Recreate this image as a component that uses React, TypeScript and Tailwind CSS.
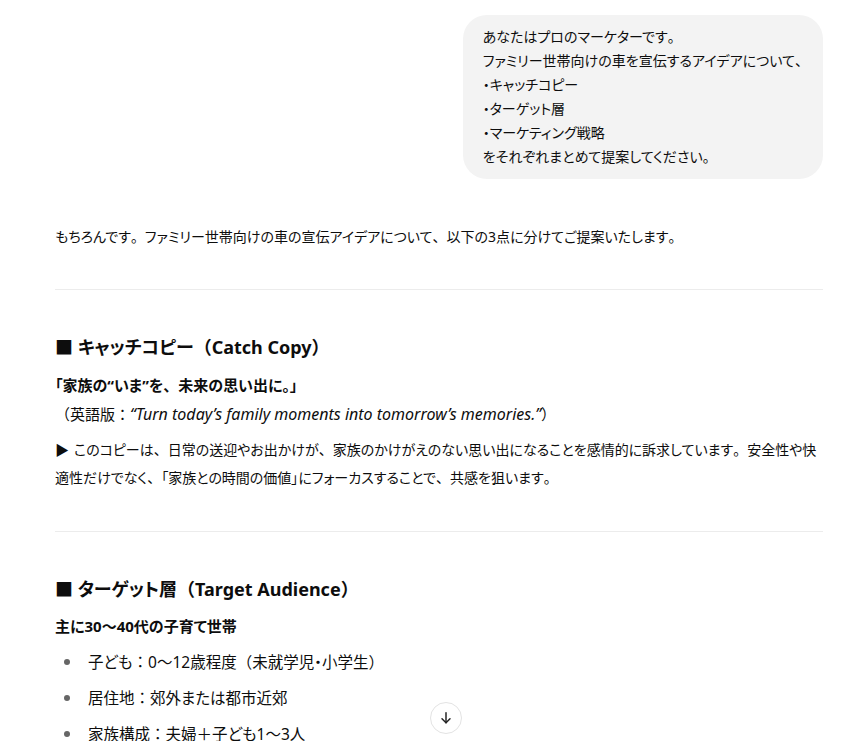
import React from "react";

const font = {
  fontFamily: '"Noto Sans", "Noto Sans CJK JP", sans-serif',
};

// Full-width punctuation keeps its full width; kana use proportional widths.
const J = ({ t }: { t: string }) => (
  <>
    {t.split(/([、。（）：＋〜])/).map((s, i) =>
      /^[、。（）：＋〜]$/.test(s) ? (
        <span key={i} className="[font-feature-settings:normal]">
          {s}
        </span>
      ) : (
        <React.Fragment key={i}>{s}</React.Fragment>
      )
    )}
  </>
);

const Bullet = ({ t }: { t: string }) => (
  <li className="flex h-[36px] items-center">
    <span className="ml-[9px] mr-[18px] h-[6px] w-[6px] shrink-0 rounded-full bg-[#666]" />
    <span>
      <J t={t} />
    </span>
  </li>
);

export default function App() {
  return (
    <div
      className="relative h-[741px] w-[861px] overflow-hidden bg-white text-[#0d0d0d] [font-feature-settings:'palt']"
      style={font}
    >
      <div className="ml-[55px] w-[768px] pt-[15px]">
        {/* user bubble */}
        <div className="flex justify-end">
          <div className="w-fit whitespace-nowrap rounded-[24px] bg-[#f3f3f3] py-[10px] pl-5 pr-[14px] text-[14px] leading-[24px]">
            <p><J t="あなたはプロのマーケターです。" /></p>
            <p><J t="ファミリー世帯向けの車を宣伝するアイデアについて、" /></p>
            <p>・キャッチコピー</p>
            <p>・ターゲット層</p>
            <p>・マーケティング戦略</p>
            <p><J t="をそれぞれまとめて提案してください。" /></p>
          </div>
        </div>

        {/* assistant */}
        <div className="mt-[44px] text-[14px] leading-[28px]">
          <p>
            <J t="もちろんです。ファミリー世帯向けの車の宣伝アイデアについて、以下の3点に分けてご提案いたします。" />
          </p>
          <hr className="mb-[43px] mt-[38px] border-t border-[#ececec]" />

          <h3 className="text-[18px] font-bold leading-[28px]">
            ■ <J t="キャッチコピー（Catch Copy）" />
          </h3>
          <p className="mt-[10px] text-[15px] font-bold">
            <J t="「家族の“いま”を、未来の思い出に。」" />
          </p>
          <p className="mt-[1px] text-[15px]">
            <J t="（英語版：" />
            <em className="text-[16px]">“Turn today’s family moments into tomorrow’s memories.”</em>
            <J t="）" />
          </p>
          <p className="mt-[8px]">
            <span className="mr-[5px]">▶</span>
            <J t="このコピーは、日常の送迎やお出かけが、家族のかけがえのない思い出になることを感情的に訴求しています。安全性や快適性だけでなく、「家族との時間の価値」にフォーカスすることで、共感を狙います。" />
          </p>
          <hr className="mb-[43px] mt-[39px] border-t border-[#ececec]" />

          <h3 className="text-[18px] font-bold leading-[28px]">
            ■ <J t="ターゲット層（Target Audience）" />
          </h3>
          <p className="mt-[9px] text-[15px] font-bold">
            <J t="主に30〜40代の子育て世帯" />
          </p>
          <ul className="mt-[4px] text-[15.5px]">
            <Bullet t="子ども：0〜12歳程度（未就学児・小学生）" />
            <Bullet t="居住地：郊外または都市近郊" />
            <Bullet t="家族構成：夫婦＋子ども1〜3人" />
          </ul>
        </div>
      </div>

      <button className="absolute left-[430px] top-[702px] flex h-[32px] w-[32px] items-center justify-center rounded-full border border-[#e3e3e3] bg-white">
        <svg width="16" height="16" viewBox="0 0 24 24" fill="none" stroke="#222" strokeWidth="2.2" strokeLinecap="round" strokeLinejoin="round">
          <path d="M12 4v15" />
          <path d="M6 13l6 6 6-6" />
        </svg>
      </button>
    </div>
  );
}
